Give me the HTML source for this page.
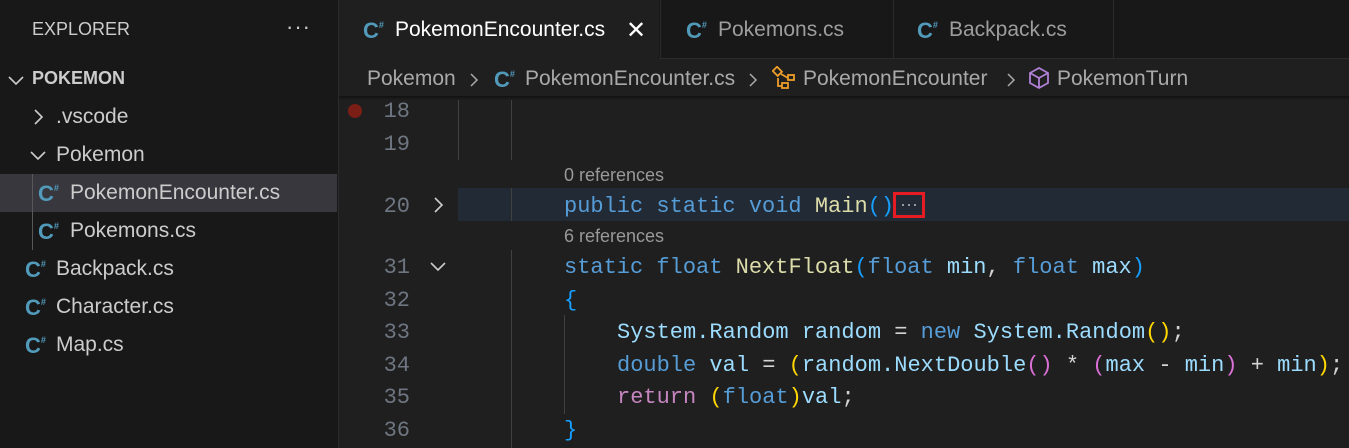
<!DOCTYPE html><html><head><style>
body{margin:0;width:1349px;height:448px;background:#1f1f1f;overflow:hidden;position:relative;font-family:"Liberation Sans",sans-serif}
.a{position:absolute;white-space:pre}
.sb{position:absolute;left:0;top:0;width:338px;height:448px;background:#181818;border-right:1px solid #2b2b2b}
.ui{font-size:21px;color:#cccccc}
.cs{font-family:"Liberation Sans",sans-serif;font-weight:bold;color:#519aba;font-size:22px}
.cs sup{font-size:9px;vertical-align:10px;margin-left:0}
.m{font-family:"Liberation Mono",monospace;font-size:22px}
.ln{color:#6e7681;width:72px;text-align:right;left:338px}
.k{color:#569cd6}.f{color:#dcdcaa}.v{color:#9cdcfe}.p{color:#179fff}.g{color:#ffd700}.pu{color:#da70d6}.r{color:#c586c0}.w{color:#d4d4d4}
.ref{font-size:18px;color:#999}
.guide{position:absolute;width:1px;background:#404040}
</style></head><body>
<div class="sb"></div>
<div class="a ui" style="left:32px;top:19px;font-size:18px;color:#ccc">EXPLORER</div>
<div class="a ui" style="left:286px;top:14px;font-size:22px;letter-spacing:1px">···</div>
<div class="a" style="left:0;top:174px;width:337px;height:38px;background:#37373d"></div>
<div class="guide" style="left:32px;top:174px;height:76px;background:#585858"></div>
<svg class="a" style="left:6px;top:70px" width="20" height="20"><path d="M3 7l7 7 7-7" stroke="#ccc" stroke-width="1.6" fill="none"/></svg>
<div class="a ui" style="left:32px;top:68px;font-weight:bold;font-size:18px">POKEMON</div>
<svg class="a" style="left:28px;top:107px" width="20" height="20"><path d="M7 3l7 7-7 7" stroke="#ccc" stroke-width="1.6" fill="none"/></svg>
<div class="a ui" style="left:56px;top:105px">.vscode</div>
<svg class="a" style="left:28px;top:145px" width="20" height="20"><path d="M3 7l7 7 7-7" stroke="#ccc" stroke-width="1.6" fill="none"/></svg>
<div class="a ui" style="left:56px;top:143px">Pokemon</div>
<div class="a cs" style="left:38px;top:181px">C<sup>#</sup></div><div class="a ui" style="left:70px;top:181px">PokemonEncounter.cs</div>
<div class="a cs" style="left:38px;top:219px">C<sup>#</sup></div><div class="a ui" style="left:70px;top:219px">Pokemons.cs</div>
<div class="a cs" style="left:25px;top:257px">C<sup>#</sup></div><div class="a ui" style="left:56px;top:257px">Backpack.cs</div>
<div class="a cs" style="left:25px;top:295px">C<sup>#</sup></div><div class="a ui" style="left:56px;top:295px">Character.cs</div>
<div class="a cs" style="left:25px;top:333px">C<sup>#</sup></div><div class="a ui" style="left:56px;top:333px">Map.cs</div>
<!-- tabs -->
<div class="a" style="left:339px;top:0;width:1010px;height:58px;background:#181818;border-bottom:1px solid #2b2b2b"></div>
<div class="a" style="left:339px;top:0;width:320px;height:59px;background:#1f1f1f"></div>
<div class="a" style="left:660px;top:0;width:1px;height:58px;background:#2b2b2b"></div>
<div class="a" style="left:893px;top:0;width:1px;height:58px;background:#2b2b2b"></div>
<div class="a" style="left:1113px;top:0;width:1px;height:58px;background:#2b2b2b"></div>
<div class="a cs" style="left:363px;top:18px">C<sup>#</sup></div><div class="a ui" style="left:395px;top:18px;color:#fff">PokemonEncounter.cs</div>
<div class="a ui" style="left:626px;top:16px;font-size:24px;color:#fff">✕</div>
<div class="a cs" style="left:686px;top:18px">C<sup>#</sup></div><div class="a ui" style="left:718px;top:18px;color:#9d9d9d">Pokemons.cs</div>
<div class="a cs" style="left:917px;top:18px">C<sup>#</sup></div><div class="a ui" style="left:949px;top:18px;color:#9d9d9d">Backpack.cs</div>
<!-- breadcrumbs -->
<div class="a" style="left:339px;top:96px;width:1010px;height:4px;background:linear-gradient(#111,#1f1f1f)"></div>
<div class="a ui" style="left:367px;top:67px;color:#a9a9a9">Pokemon</div>
<svg class="a" style="left:467px;top:70px" width="14" height="20"><path d="M4 4l6 6-6 6" stroke="#a9a9a9" stroke-width="1.5" fill="none"/></svg>
<div class="a cs" style="left:494px;top:67px">C<sup>#</sup></div><div class="a ui" style="left:525px;top:67px;color:#a9a9a9">PokemonEncounter.cs</div>
<svg class="a" style="left:746px;top:70px" width="14" height="20"><path d="M4 4l6 6-6 6" stroke="#a9a9a9" stroke-width="1.5" fill="none"/></svg>
<svg class="a" style="left:772px;top:66px" width="26" height="24"><g stroke="#ee9d28" stroke-width="1.8" fill="none"><rect x="2" y="2" width="7" height="6" transform="rotate(45 5 5)"/><rect x="16" y="9" width="6" height="5"/><rect x="10" y="17" width="6" height="5"/><path d="M9 8l7 4M6 12v8h4"/></g></svg>
<div class="a ui" style="left:803px;top:67px;color:#a9a9a9">PokemonEncounter</div>
<svg class="a" style="left:1004px;top:70px" width="14" height="20"><path d="M4 4l6 6-6 6" stroke="#a9a9a9" stroke-width="1.5" fill="none"/></svg>
<svg class="a" style="left:1027px;top:66px" width="24" height="24"><g stroke="#b180d7" stroke-width="1.8" fill="none"><path d="M12 2l9 5v10l-9 5-9-5V7z M3 7l9 5 9-5 M12 12v10"/></g></svg>
<div class="a ui" style="left:1057px;top:67px;color:#a9a9a9">PokemonTurn</div>
<!-- editor -->
<div class="a" style="left:458px;top:188px;width:891px;height:33px;background:#222a35"></div>
<div class="guide" style="left:458px;top:100px;height:60px"></div>
<div class="guide" style="left:511px;top:100px;height:60px"></div>
<div class="guide" style="left:511px;top:188px;height:33px"></div>
<div class="guide" style="left:511px;top:250px;height:198px"></div>
<div class="guide" style="left:564px;top:315px;height:99px"></div>
<div class="a" style="left:348px;top:104px;width:14px;height:14px;border-radius:50%;background:#7a1e16"></div>
<div class="a m ln" style="top:99px">18</div>
<div class="a m ln" style="top:132px">19</div>
<div class="a ref" style="left:564px;top:165px">0 references</div>
<div class="a m ln" style="top:194px">20</div>
<svg class="a" style="left:428px;top:195px" width="20" height="20"><path d="M7 3l7 7-7 7" stroke="#ccc" stroke-width="1.6" fill="none"/></svg>
<div class="a m" style="left:564px;top:194px"><span class="k">public static void</span> <span class="f">Main</span><span class="p">()</span></div>
<div class="a" style="left:893px;top:192px;width:32px;height:26px;border:3px solid #e51c23;box-sizing:border-box;color:#aaa;font-size:18px;text-align:center;line-height:18px">···</div>
<div class="a ref" style="left:564px;top:226px">6 references</div>
<div class="a m ln" style="top:255px">31</div>
<svg class="a" style="left:428px;top:256px" width="20" height="20"><path d="M3 7l7 7 7-7" stroke="#ccc" stroke-width="1.6" fill="none"/></svg>
<div class="a m" style="left:564px;top:255px"><span class="k">static float</span> <span class="f">NextFloat</span><span class="p">(</span><span class="k">float</span> <span class="v">min</span><span class="w">,</span> <span class="k">float</span> <span class="v">max</span><span class="p">)</span></div>
<div class="a m ln" style="top:288px">32</div>
<div class="a m p" style="left:564px;top:288px">{</div>
<div class="a m ln" style="top:320px">33</div>
<div class="a m" style="left:617px;top:320px"><span class="v">System.Random random</span> <span class="w">=</span> <span class="k">new</span> <span class="v">System.Random</span><span class="g">()</span><span class="w">;</span></div>
<div class="a m ln" style="top:353px">34</div>
<div class="a m" style="left:617px;top:353px"><span class="k">double</span> <span class="v">val</span> <span class="w">=</span> <span class="g">(</span><span class="v">random.NextDouble</span><span class="pu">()</span> <span class="w">*</span> <span class="pu">(</span><span class="v">max</span> <span class="w">-</span> <span class="v">min</span><span class="pu">)</span> <span class="w">+</span> <span class="v">min</span><span class="g">)</span><span class="w">;</span></div>
<div class="a m ln" style="top:385px">35</div>
<div class="a m" style="left:617px;top:385px"><span class="r">return</span> <span class="g">(</span><span class="k">float</span><span class="g">)</span><span class="v">val</span><span class="w">;</span></div>
<div class="a m ln" style="top:418px">36</div>
<div class="a m p" style="left:564px;top:418px">}</div>
</body></html>
